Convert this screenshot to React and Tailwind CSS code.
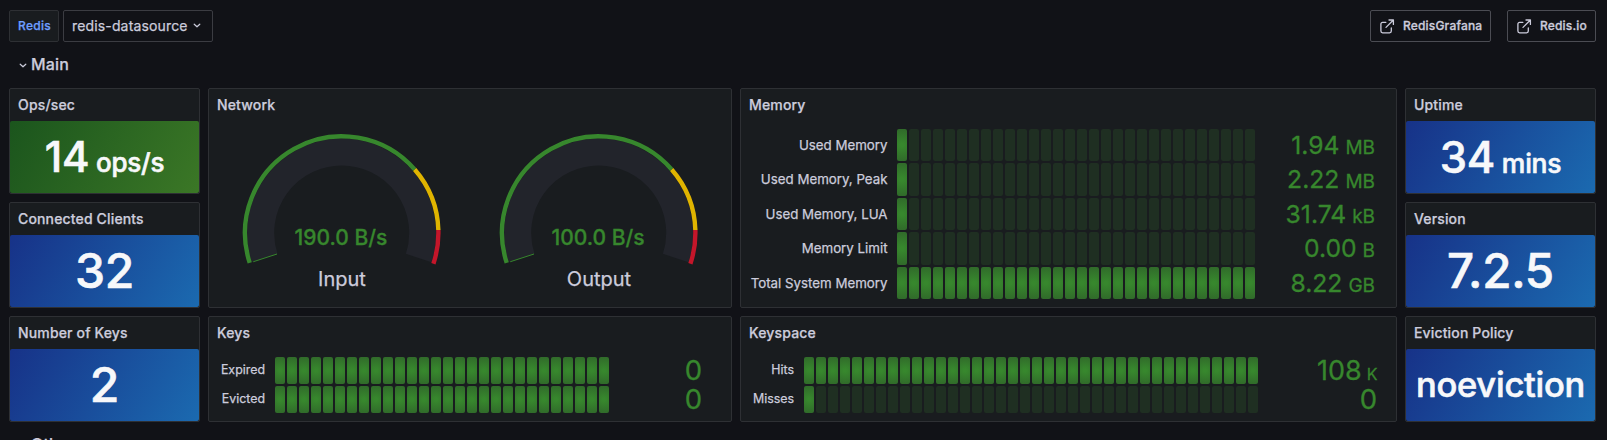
import React from "react";

const FONT = "font-['Inter','Liberation_Sans',sans-serif]";

function Panel({ title, className = "", children }) {
  return (
    <section className={`flex min-w-0 flex-col overflow-hidden rounded-[2px] border border-[#2e3034] bg-[#191c1f] ${className}`}>
      <h2 className="h-8 shrink-0 px-2 text-[14px] leading-8 font-medium tracking-[0.15px]">{title}</h2>
      {children}
    </section>
  );
}

function Stat({ title, green, children }) {
  const bg = green
    ? "bg-[linear-gradient(120deg,#1b551d,#3b7726)]"
    : "bg-[linear-gradient(120deg,#173288,#1b6ab0)]";
  return (
    <Panel title={title}>
      <div className={`flex flex-1 items-baseline justify-center overflow-hidden rounded-[2px] font-medium tracking-[-0.25px] whitespace-pre text-[#f7f8fa] [-webkit-text-stroke:0.6px] ${bg}`}>
        {children}
      </div>
    </Panel>
  );
}

function point(cx, cy, r, deg) {
  const a = (deg * Math.PI) / 180;
  return `${(cx + r * Math.cos(a)).toFixed(2)} ${(cy - r * Math.sin(a)).toFixed(2)}`;
}

function Arc({ r, from, to, color, width }) {
  const large = from - to > 180 ? 1 : 0;
  return (
    <path
      d={`M${point(109.7, 112, r, from)}A${r} ${r} 0 ${large} 1 ${point(109.7, 112, r, to)}`}
      fill="none"
      stroke={color}
      strokeWidth={width}
    />
  );
}

function Gauge({ value, label, className }) {
  return (
    <div className={`flex w-[220px] flex-col items-center ${className}`}>
      <svg width="220" height="146" viewBox="0 0 220 146" className="block shrink-0">
        <Arc r={81} from={198} to={-18} color="#22242b" width={27} />
        <Arc r={96.7} from={198} to={41} color="#37872d" width={4.4} />
        <Arc r={96.7} from={41} to={1.8} color="#e0b400" width={4.4} />
        <Arc r={96.7} from={1.8} to={-18.5} color="#c4162a" width={4.4} />
        <path d={`M${point(109.7, 112, 68, 198)}L${point(109.7, 112, 93, 198)}`} stroke="#37872d" strokeWidth="1" />
        <text x="109" y="124" textAnchor="middle" fontSize="21" fontWeight="500" fill="#37872d" stroke="#37872d" strokeWidth="0.3">{value}</text>
      </svg>
      <div className="text-[20px] leading-6">{label}</div>
    </div>
  );
}

function Cells({ count, lit }) {
  return (
    <div className="flex shrink-0 gap-[2px]">
      {Array.from({ length: count }, (_, i) => (
        <div
          key={i}
          className={`w-[10px] rounded-[2px] ${i < lit ? "bg-[radial-gradient(circle,#37872d_10%,#30692a)]" : "bg-[#1f2f22]"}`}
        />
      ))}
    </div>
  );
}

function BarRow({ label, value, unit, count, lit, height, labelClass, valueClass, unitClass }) {
  return (
    <div className={`flex ${height}`}>
      <div className={`flex shrink-0 items-center justify-end whitespace-nowrap ${labelClass}`}>{label}</div>
      <Cells count={count} lit={lit} />
      <div className={`flex flex-1 items-baseline justify-end whitespace-pre text-[#37872d] [-webkit-text-stroke:0.3px] ${valueClass}`}>
        <span>{value}</span>
        {unit && <span className={unitClass}>{unit}</span>}
      </div>
    </div>
  );
}

const memory = [
  ["Used Memory", "1.94", "MB", 1, "h-8"],
  ["Used Memory, Peak", "2.22", "MB", 1, "h-[33px]"],
  ["Used Memory, LUA", "31.74", "kB", 1, "h-8"],
  ["Memory Limit", "0.00", "B", 1, "h-[33px]"],
  ["Total System Memory", "8.22", "GB", 30, "h-8"],
];

function Chevron({ className }) {
  return (
    <svg viewBox="0 0 8 5" className={className} fill="none" stroke="currentColor" strokeWidth="1.2" strokeLinecap="round" strokeLinejoin="round">
      <path d="M1.2 1.2 4 3.8 6.8 1.2" />
    </svg>
  );
}

function LinkButton({ children, className }) {
  return (
    <a className={`flex h-8 items-center rounded-[2px] border border-[#4b4c53] pl-[9px] text-[12px] font-medium tracking-[0.18px] [-webkit-text-stroke:0.3px] ${className}`}>
      <svg width="15" height="15" viewBox="0 0 15 15" className="mr-2 shrink-0" fill="none" stroke="currentColor" strokeWidth="1.3" strokeLinecap="round" strokeLinejoin="round">
        <path d="M5.8 3.4H2.6c-1 0-1.7.7-1.7 1.7v7c0 1 .7 1.7 1.7 1.7h7c1 0 1.7-.7 1.7-1.7V8.9M9 1h4.4v4.4M13.4 1 6 8.4" />
      </svg>
      {children}
    </a>
  );
}

export default function App() {
  return (
    <div className={`flex h-[440px] w-[1607px] flex-col overflow-hidden bg-[#111217] pr-[11px] pl-[9px] text-[#ccccdc] [-webkit-text-stroke:0.25px] ${FONT}`}>
      <header className="mt-[10px] flex h-8 shrink-0">
        <div className="flex w-[50px] items-center rounded-[2px] border border-[#2e3034] bg-[#191c1f] pl-2 text-[12px] font-medium tracking-[0.3px] text-[#6e9fff]">Redis</div>
        <button className="ml-1 flex w-[150px] items-center rounded-[2px] border border-[#3b3c42] pb-[2px] pl-2 text-[14px] tracking-[0.15px]">
          redis-datasource
          <Chevron className="mt-px ml-[5px] h-[5px] w-2" />
        </button>
        <div className="ml-auto flex gap-4">
          <LinkButton className="w-[121px]">RedisGrafana</LinkButton>
          <LinkButton className="w-[89px]">Redis.io</LinkButton>
        </div>
      </header>
      <div className="mt-[10px] flex h-6 shrink-0 items-center pl-[10px] text-[16px] font-medium tracking-[0.15px]">
        <Chevron className="mt-[3px] mr-1 h-[5px] w-2" />
        Main
      </div>
      <main className="mt-3 grid shrink-0 grid-cols-[191px_524px_657px_191px] grid-rows-[106px_106px_106px] gap-2">
        <Stat title="Ops/sec" green>
          <span className="text-[42px] leading-[72px]">14</span>
          <span className="text-[26px]"> ops/s</span>
        </Stat>
        <Panel title="Network" className="row-span-2">
          <div className="flex">
            <Gauge value="190.0 B/s" label="Input" className="ml-[23px]" />
            <Gauge value="100.0 B/s" label="Output" className="ml-[37px]" />
          </div>
        </Panel>
        <Panel title="Memory" className="row-span-2">
          <div className="mt-2 flex flex-col gap-[2px]">
            {memory.map(([label, value, unit, lit, height]) => (
              <BarRow
                key={label}
                label={label}
                value={value}
                unit={unit}
                count={30}
                lit={lit}
                height={height}
                labelClass="w-[156px] pt-px pr-[9.5px] text-[13.3px]"
                valueClass="pr-[21px] text-[24.7px] leading-8"
                unitClass="ml-[6px] text-[19px]"
              />
            ))}
          </div>
        </Panel>
        <Stat title="Uptime">
          <span className="text-[43.5px] leading-[72px]">34</span>
          <span className="text-[26.5px]"> mins</span>
        </Stat>
        <Stat title="Connected Clients">
          <span className="text-[48px] leading-[72px]">32</span>
        </Stat>
        <Stat title="Version">
          <span className="text-[47.5px] leading-[72px]">7.2.5</span>
        </Stat>
        <Stat title="Number of Keys">
          <span className="text-[48px] leading-[72px]">2</span>
        </Stat>
        <Panel title="Keys">
          <div className="mt-2 flex flex-col gap-[2px]">
            {["Expired", "Evicted"].map((label) => (
              <BarRow
                key={label}
                label={label}
                value="0"
                count={28}
                lit={28}
                height="h-[27px]"
                labelClass="w-[66px] pr-[10px] text-[12.4px]"
                valueClass="pr-[29px] text-[27.5px] leading-[27px]"
              />
            ))}
          </div>
        </Panel>
        <Panel title="Keyspace">
          <div className="mt-2 flex flex-col gap-[2px]">
            <BarRow label="Hits" value="108" unit="K" count={38} lit={38} height="h-[27px]" labelClass="w-[63px] pr-[10px] text-[12.4px]" valueClass="pr-[18.5px] text-[27px] leading-[27px]" unitClass="ml-[5px] text-[16px]" />
            <BarRow label="Misses" value="0" count={38} lit={1} height="h-[27px]" labelClass="w-[63px] pr-[10px] text-[12.4px]" valueClass="pr-[19px] text-[27.5px] leading-[27px]" />
          </div>
        </Panel>
        <Stat title="Eviction Policy">
          <span className="text-[34.5px] leading-[72px]">noeviction</span>
        </Stat>
      </main>
      <div className="mt-[10px] flex h-6 shrink-0 items-center pl-[10px] text-[16px] font-medium tracking-[0.15px]">
        <Chevron className="mt-[3px] mr-1 h-[5px] w-2" />
        Other
      </div>
    </div>
  );
}
